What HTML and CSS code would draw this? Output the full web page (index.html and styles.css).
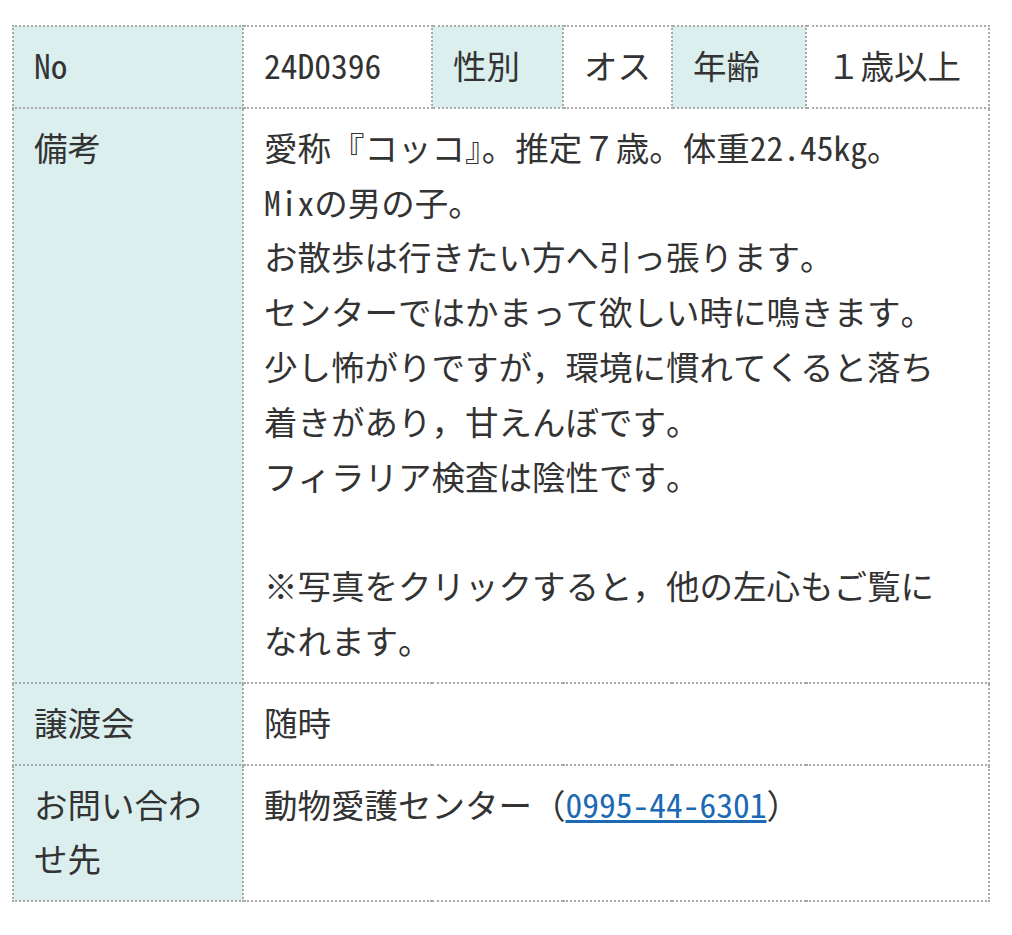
FILE: index.html
```html
<!DOCTYPE html>
<html lang="ja">
<head>
<meta charset="utf-8">
<link rel="stylesheet" href="styles.css">
</head>
<body>
<div class="wrap">
<table class="info">
  <colgroup>
    <col class="c1"><col class="c2"><col class="c3"><col class="c4"><col class="c5"><col class="c6">
  </colgroup>
  <tr class="top">
    <th>No</th>
    <td>24D0396</td>
    <th>性別</th>
    <td>オス</td>
    <th>年齢</th>
    <td>１歳以上</td>
  </tr>
  <tr>
    <th>備考</th>
    <td colspan="5">愛称『コッコ』。推定７歳。体重22.45kg。<br>Mixの男の子。<br>お散歩は行きたい方へ引っ張ります。<br>センターではかまって欲しい時に鳴きます。<br>少し怖がりですが，環境に慣れてくると落ち着きがあり，甘えんぼです。<br>フィラリア検査は陰性です。<br><br>※写真をクリックすると，他の左心もご覧になれます。</td>
  </tr>
  <tr>
    <th>譲渡会</th>
    <td colspan="5">随時</td>
  </tr>
  <tr>
    <th>お問い合わせ先</th>
    <td colspan="5">動物愛護センター（<a href="#">0995-44-6301</a>）</td>
  </tr>
</table>
</div>
</body>
</html>
```

FILE: styles.css
```css
html, body {
  margin: 0;
  padding: 0;
  background: #fff;
}
.wrap {
  padding: 25px 24px 30px 12px;
}
.info {
  width: 976px;
  table-layout: fixed;
  border-collapse: collapse;
  font-family: "Noto Sans Mono CJK JP", "Noto Sans CJK JP", sans-serif;
  font-size: 33.5px;
  line-height: 54.8px;
  color: #333;
}
.c1 { width: 230px; }
.c2 { width: 189px; }
.c3 { width: 131px; }
.c4 { width: 109px; }
.c5 { width: 134px; }
.c6 { width: 183px; }
.info th, .info td {
  border: 2px dotted #aaa;
  padding: 11px 28px 14px 20px;
  text-align: left;
  vertical-align: top;
  font-weight: normal;
}
.info th {
  background: #dcefef;
}
.top th, .top td {
  white-space: nowrap;
}
.info a {
  color: #1c6ab3;
  text-decoration: underline;
}
```
